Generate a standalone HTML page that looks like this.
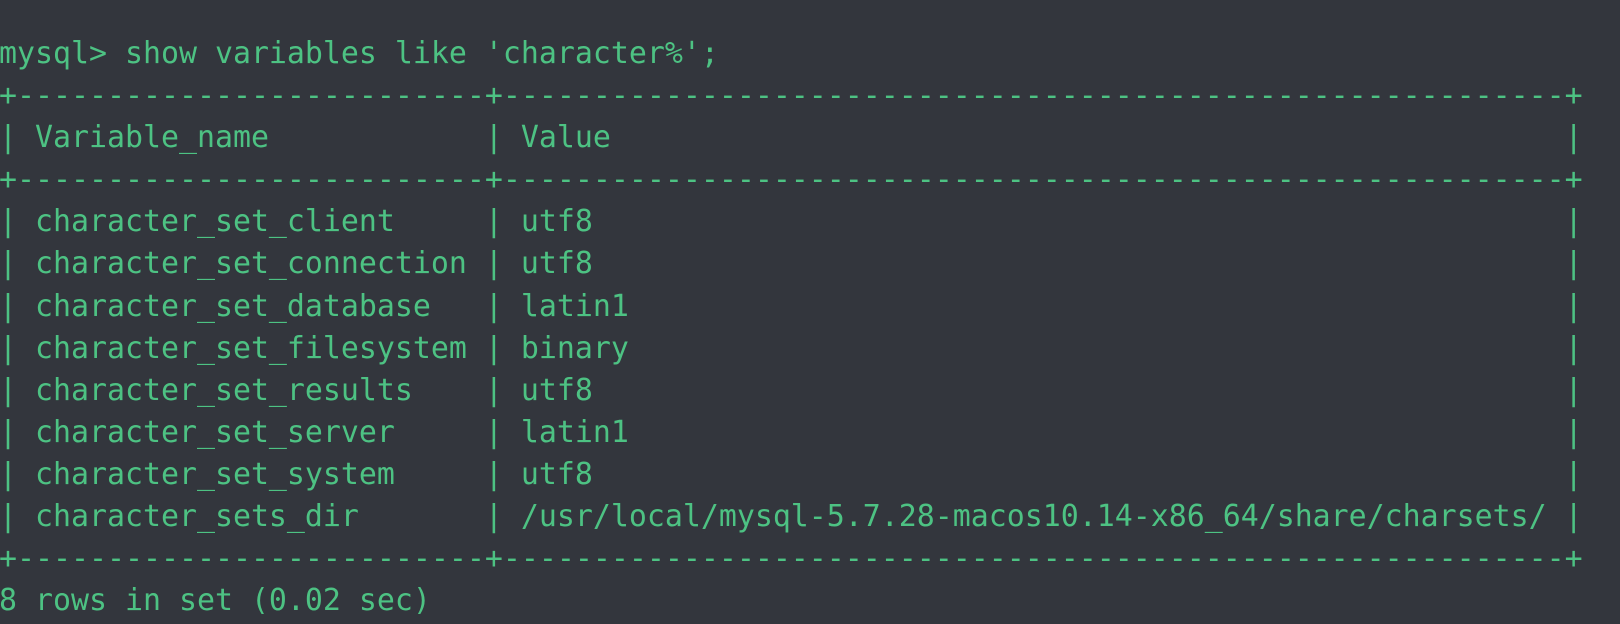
<!DOCTYPE html>
<html><head><style>
html,body{margin:0;padding:0;background:#33363d;width:1620px;height:624px;overflow:hidden}
pre{margin:0;position:absolute;left:-1px;top:33px;font-family:"DejaVu Sans Mono","Liberation Mono",monospace;font-size:29.9px;line-height:42.1px;color:#4dc283;white-space:pre}
</style></head><body>
<pre>mysql&gt; show variables like 'character%';
+--------------------------+-----------------------------------------------------------+
| Variable_name            | Value                                                     |
+--------------------------+-----------------------------------------------------------+
| character_set_client     | utf8                                                      |
| character_set_connection | utf8                                                      |
| character_set_database   | latin1                                                    |
| character_set_filesystem | binary                                                    |
| character_set_results    | utf8                                                      |
| character_set_server     | latin1                                                    |
| character_set_system     | utf8                                                      |
| character_sets_dir       | /usr/local/mysql-5.7.28-macos10.14-x86_64/share/charsets/ |
+--------------------------+-----------------------------------------------------------+
8 rows in set (0.02 sec)</pre>
</body></html>
